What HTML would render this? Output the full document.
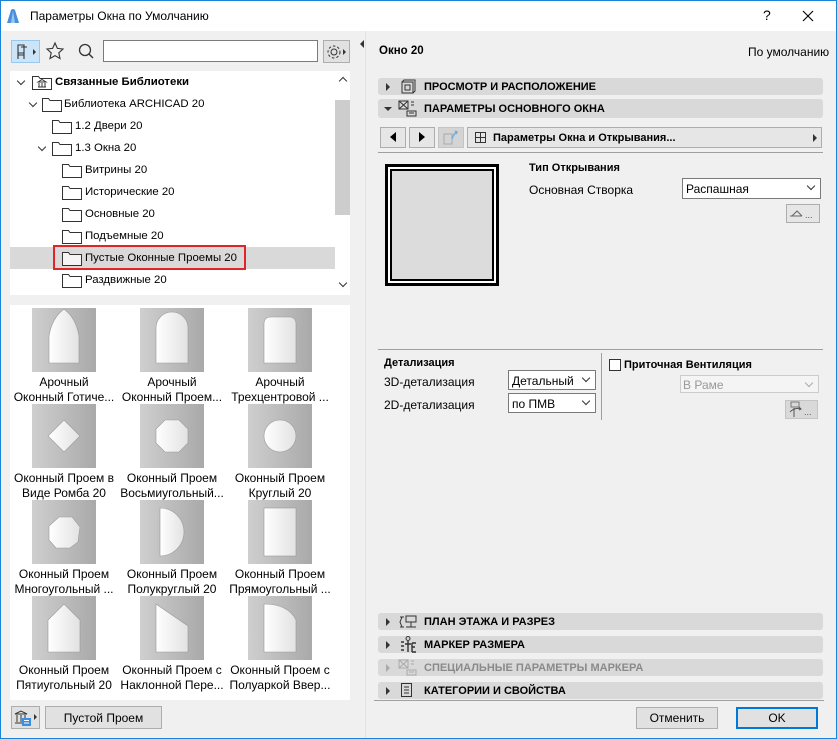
<!DOCTYPE html>
<html><head><meta charset="utf-8"><style>
*{box-sizing:border-box;margin:0;padding:0}
body{width:837px;height:739px;overflow:hidden;font-family:"Liberation Sans","Noto Sans CJK SC",sans-serif;font-size:12px;color:#000;background:#f0f0f0;position:relative}
.a{position:absolute}
.t{position:absolute;white-space:nowrap;line-height:14px}
.tr{font-size:11.4px}
.b{font-weight:bold}
.bar{position:absolute;left:378px;width:445px;height:17px;background:#d9d9d9;border-radius:3px}
.bar .t{left:46px;top:2px;font-weight:bold;font-size:11px}
.tri{position:absolute;width:0;height:0}
.btn{position:absolute;background:#e1e1e1;border:1px solid #adadad}
.sel{position:absolute;background:#fff;border:1px solid #7a7a7a}
.chev{position:absolute;width:6px;height:6px;border-right:1px solid #333;border-bottom:1px solid #333;transform:rotate(45deg)}
.cell{position:absolute;width:108px;text-align:center;line-height:15px;font-size:12px}
.thumb{position:absolute;width:64px;height:64px}
</style></head><body>
<div class="a" style="left:0;top:0;width:837px;height:739px;border:1px solid #1883d7;z-index:9;pointer-events:none"></div>
<div class="a" style="left:0;top:0;width:837px;height:31px;background:#fff"></div>
<svg class="a" style="left:6px;top:8px" width="14" height="16"><path d="M1 15 L5 2 Q7 0 9 2 L13 15Z" fill="#4a8fdc"/><path d="M5 15 L7 3 L9 15Z" fill="#9cc6f2"/></svg>
<div class="t" style="left:30px;top:9px;font-size:12px">Параметры Окна по Умолчанию</div>
<div class="t" style="left:763px;top:8px;font-size:14px">?</div>
<svg class="a" style="left:802px;top:10px" width="12" height="12"><path d="M1 1L11 11M11 1L1 11" stroke="#000" stroke-width="1.1"/></svg>

<div class="a" style="left:365px;top:31px;width:1px;height:708px;background:#e3e3e3"></div>
<div class="tri" style="left:360px;top:40px;border-right:4px solid #333;border-top:4px solid transparent;border-bottom:4px solid transparent"></div>

<div class="a" style="left:11px;top:40px;width:29px;height:23px;background:#cce4f7;border:1px solid #99c8ee"></div>
<svg class="a" style="left:15px;top:43px" width="24" height="18"><path d="M3 2h6v8H3zM3 10v6M9 10v6M3 12h6M6 4h6" fill="none" stroke="#333" stroke-width="1.1"/><path d="M18 6l3 3-3 3z" fill="#333"/></svg>
<svg class="a" style="left:45px;top:41px" width="20" height="20"><path d="M10 2l2.4 5.4 5.6.6-4.2 3.8 1.2 5.7L10 14.6 5 17.5l1.2-5.7L2 8l5.6-.6z" fill="none" stroke="#333" stroke-width="1.1"/></svg>
<svg class="a" style="left:77px;top:42px" width="18" height="18"><circle cx="8" cy="8" r="5.5" fill="none" stroke="#333" stroke-width="1.3"/><path d="M12 12l4 4" stroke="#333" stroke-width="1.4"/></svg>
<div class="sel" style="left:103px;top:40px;width:215px;height:22px"></div>
<div class="btn" style="left:323px;top:40px;width:27px;height:23px"></div>
<svg class="a" style="left:325px;top:43px" width="24" height="18"><circle cx="9" cy="9" r="3" fill="none" stroke="#333"/><circle cx="9" cy="9" r="6" fill="none" stroke="#333" stroke-dasharray="2.5 2"/><path d="M18 6l3 3-3 3z" fill="#333"/></svg>

<div class="a" style="left:10px;top:71px;width:340px;height:224px;background:#fff"></div>
<div class="a" style="left:335px;top:100px;width:15px;height:115px;background:#cdcdcd"></div>
<div class="chev" style="left:340px;top:78px;transform:rotate(225deg)"></div>
<div class="chev" style="left:340px;top:280px"></div>
<div class="a" style="left:10px;top:247px;width:325px;height:22px;background:#d9d9d9"></div>
<div class="a" style="left:53px;top:245px;width:193px;height:25px;border:2px solid #e0252a"></div>

<div class="chev" style="left:18px;top:78px"></div>
<svg class="a" style="left:32px;top:74px" width="20" height="16"><path d="M.5 2.5h6l1.5 2h11.5v11H.5z" fill="#fff" stroke="#333"/><path d="M6 8l4-2.5 4 2.5zM6 13h8M7 9v3.5M10 9v3.5M13 9v3.5" stroke="#333" fill="none"/></svg>
<div class="t b tr" style="left:55px;top:75px">Связанные Библиотеки</div>

<div class="chev" style="left:30px;top:100px"></div>
<svg class="a" style="left:42px;top:96px" width="20" height="16"><path d="M.5 2.5h6l1.5 2h11.5v11H.5z" fill="#fff" stroke="#333"/></svg>
<div class="t tr" style="left:64px;top:97px">Библиотека ARCHICAD 20</div>

<svg class="a" style="left:52px;top:118px" width="20" height="16"><path d="M.5 2.5h6l1.5 2h11.5v11H.5z" fill="#fff" stroke="#333"/></svg>
<div class="t tr" style="left:75px;top:119px">1.2 Двери 20</div>

<div class="chev" style="left:39px;top:144px"></div>
<svg class="a" style="left:52px;top:140px" width="20" height="16"><path d="M.5 2.5h6l1.5 2h11.5v11H.5z" fill="#fff" stroke="#333"/></svg>
<div class="t tr" style="left:75px;top:141px">1.3 Окна 20</div>

<svg class="a" style="left:62px;top:162px" width="20" height="16"><path d="M.5 2.5h6l1.5 2h11.5v11H.5z" fill="#fff" stroke="#333"/></svg>
<div class="t tr" style="left:85px;top:163px">Витрины 20</div>
<svg class="a" style="left:62px;top:184px" width="20" height="16"><path d="M.5 2.5h6l1.5 2h11.5v11H.5z" fill="#fff" stroke="#333"/></svg>
<div class="t tr" style="left:85px;top:185px">Исторические 20</div>
<svg class="a" style="left:62px;top:206px" width="20" height="16"><path d="M.5 2.5h6l1.5 2h11.5v11H.5z" fill="#fff" stroke="#333"/></svg>
<div class="t tr" style="left:85px;top:207px">Основные 20</div>
<svg class="a" style="left:62px;top:228px" width="20" height="16"><path d="M.5 2.5h6l1.5 2h11.5v11H.5z" fill="#fff" stroke="#333"/></svg>
<div class="t tr" style="left:85px;top:229px">Подъемные 20</div>
<svg class="a" style="left:62px;top:250px" width="20" height="16"><path d="M.5 2.5h6l1.5 2h11.5v11H.5z" fill="#f4f4f4" stroke="#333"/></svg>
<div class="t tr" style="left:85px;top:251px">Пустые Оконные Проемы 20</div>
<svg class="a" style="left:62px;top:272px" width="20" height="16"><path d="M.5 2.5h6l1.5 2h11.5v11H.5z" fill="#fff" stroke="#333"/></svg>
<div class="t tr" style="left:85px;top:273px">Раздвижные 20</div>

<div class="a" style="left:10px;top:305px;width:340px;height:395px;background:#fff"></div>
<svg width="0" height="0" style="position:absolute"><defs>
<linearGradient id="g" x1="0" y1="0" x2="1" y2="0"><stop offset="0" stop-color="#cfcfcf"/><stop offset="1" stop-color="#a9a9a9"/></linearGradient>
<linearGradient id="w" x1="0" y1="0" x2="1" y2="0"><stop offset="0" stop-color="#fff"/><stop offset="1" stop-color="#e2e2e2"/></linearGradient>
</defs></svg>
<svg class="thumb" style="left:32px;top:308px"><rect width="64" height="64" fill="url(#g)"/><path d="M17 55V28Q20 10 32 1Q44 10 47 28V55z" fill="url(#w)" stroke="#999" stroke-width=".6"/></svg>
<svg class="thumb" style="left:140px;top:308px"><rect width="64" height="64" fill="url(#g)"/><path d="M16 55V20A16 16 0 0 1 48 20V55z" fill="url(#w)" stroke="#999" stroke-width=".6"/></svg>
<svg class="thumb" style="left:248px;top:308px"><rect width="64" height="64" fill="url(#g)"/><path d="M16 55V16Q16 9 23 9H41Q48 9 48 16V55z" fill="url(#w)" stroke="#999" stroke-width=".6"/></svg>
<div class="cell" style="left:10px;top:375px">Арочный<br>Оконный Готиче...</div>
<div class="cell" style="left:118px;top:375px">Арочный<br>Оконный Проем...</div>
<div class="cell" style="left:226px;top:375px">Арочный<br>Трехцентровой ...</div>
<svg class="thumb" style="left:32px;top:404px"><rect width="64" height="64" fill="url(#g)"/><path d="M32 16L48 32L32 48L16 32z" fill="url(#w)" stroke="#999" stroke-width=".6"/></svg>
<svg class="thumb" style="left:140px;top:404px"><rect width="64" height="64" fill="url(#g)"/><path d="M25 16H39L48 25V39L39 48H25L16 39V25z" fill="url(#w)" stroke="#999" stroke-width=".6"/></svg>
<svg class="thumb" style="left:248px;top:404px"><rect width="64" height="64" fill="url(#g)"/><circle cx="32" cy="32" r="16" fill="url(#w)" stroke="#999" stroke-width=".6"/></svg>
<div class="cell" style="left:10px;top:471px">Оконный Проем в<br>Виде Ромба 20</div>
<div class="cell" style="left:118px;top:471px">Оконный Проем<br>Восьмиугольный...</div>
<div class="cell" style="left:226px;top:471px">Оконный Проем<br>Круглый 20</div>
<svg class="thumb" style="left:32px;top:500px"><rect width="64" height="64" fill="url(#g)"/><path d="M27 17L40 17L48 27L46 42L38 48L24 48L17 40L17 26z" fill="url(#w)" stroke="#999" stroke-width=".6"/></svg>
<svg class="thumb" style="left:140px;top:500px"><rect width="64" height="64" fill="url(#g)"/><path d="M20 8V56A24 24 0 0 0 20 8z" fill="url(#w)" stroke="#999" stroke-width=".6"/></svg>
<svg class="thumb" style="left:248px;top:500px"><rect width="64" height="64" fill="url(#g)"/><rect x="16" y="8" width="32" height="48" fill="url(#w)" stroke="#999" stroke-width=".6"/></svg>
<div class="cell" style="left:10px;top:567px">Оконный Проем<br>Многоугольный ...</div>
<div class="cell" style="left:118px;top:567px">Оконный Проем<br>Полукруглый 20</div>
<div class="cell" style="left:226px;top:567px">Оконный Проем<br>Прямоугольный ...</div>
<svg class="thumb" style="left:32px;top:596px"><rect width="64" height="64" fill="url(#g)"/><path d="M16 56V24L32 8L48 24V56z" fill="url(#w)" stroke="#999" stroke-width=".6"/></svg>
<svg class="thumb" style="left:140px;top:596px"><rect width="64" height="64" fill="url(#g)"/><path d="M16 56V8L48 30V56z" fill="url(#w)" stroke="#999" stroke-width=".6"/></svg>
<svg class="thumb" style="left:248px;top:596px"><rect width="64" height="64" fill="url(#g)"/><path d="M16 56V8Q40 8 48 24V56z" fill="url(#w)" stroke="#999" stroke-width=".6"/></svg>
<div class="cell" style="left:10px;top:663px">Оконный Проем<br>Пятиугольный 20</div>
<div class="cell" style="left:118px;top:663px">Оконный Проем с<br>Наклонной Пере...</div>
<div class="cell" style="left:226px;top:663px">Оконный Проем с<br>Полуаркой Ввер...</div>

<div class="btn" style="left:11px;top:706px;width:29px;height:23px"></div>
<svg class="a" style="left:13px;top:708px" width="26" height="20"><path d="M2 6l6-3 6 3zM2 15h12M4 7v7M8 7v7M12 7v7" stroke="#333" fill="none"/><rect x="9" y="10" width="9" height="8" fill="#3a8fe0"/><path d="M11 12.5h5M11 15h5" stroke="#fff"/><path d="M21 6l3 3-3 3z" fill="#333"/></svg>
<div class="btn" style="left:45px;top:706px;width:117px;height:23px"></div>
<div class="t" style="left:45px;top:711px;width:117px;text-align:center">Пустой Проем</div>

<div class="t b" style="left:379px;top:44px;font-size:11.5px">Окно 20</div>
<div class="t" style="left:748px;top:45px">По умолчанию</div>

<div class="bar" style="top:78px"><div class="tri" style="left:8px;top:5px;border-left:4px solid #333;border-top:4px solid transparent;border-bottom:4px solid transparent"></div>
<svg class="a" style="left:22px;top:1px" width="16" height="15"><rect x="2" y="3" width="11" height="11" fill="none" stroke="#333"/><rect x="5" y="6" width="5" height="5" fill="none" stroke="#333"/><path d="M2 3l2-2h11v11l-2 2" fill="none" stroke="#333"/></svg>
<div class="t">ПРОСМОТР И РАСПОЛОЖЕНИЕ</div></div>

<div class="bar" style="top:99px;height:19px"><div class="tri" style="left:6px;top:8px;border-top:4px solid #333;border-left:4px solid transparent;border-right:4px solid transparent"></div>
<svg class="a" style="left:20px;top:1px" width="20" height="17"><rect x="1" y="1" width="9" height="8" fill="none" stroke="#333"/><path d="M1 1l9 8M10 1l-9 8M13 2h3M13 5h3M9 11h9v5H9zM11 13h5" stroke="#333" fill="none"/></svg>
<div class="t" style="top:3px">ПАРАМЕТРЫ ОСНОВНОГО ОКНА</div></div>

<div class="btn" style="left:380px;top:127px;width:26px;height:21px;background:#e6e6e6"></div>
<div class="tri" style="left:390px;top:132px;border-right:6px solid #000;border-top:5px solid transparent;border-bottom:5px solid transparent"></div>
<div class="btn" style="left:409px;top:127px;width:26px;height:21px;background:#e6e6e6"></div>
<div class="tri" style="left:419px;top:132px;border-left:6px solid #000;border-top:5px solid transparent;border-bottom:5px solid transparent"></div>
<div class="btn" style="left:438px;top:127px;width:26px;height:21px;background:#d4d4d4;border-color:#c4c4c4"></div>
<svg class="a" style="left:443px;top:130px" width="16" height="15"><rect x="1" y="4" width="8" height="10" fill="none" stroke="#aaa"/><path d="M9 9Q11 3 14 2M12 1l2 1-1 2" stroke="#6aaee8" fill="none" stroke-width="1.5"/></svg>
<div class="btn" style="left:467px;top:127px;width:355px;height:21px;background:#e6e6e6"></div>
<svg class="a" style="left:475px;top:132px" width="12" height="12"><rect x=".5" y=".5" width="10" height="10" fill="none" stroke="#333"/><path d="M5.5 0v11M0 5.5h11" stroke="#333"/></svg>
<div class="t b" style="left:493px;top:131px;font-size:11px">Параметры Окна и Открывания...</div>
<div class="tri" style="left:813px;top:134px;border-left:4px solid #333;border-top:4px solid transparent;border-bottom:4px solid transparent"></div>

<div class="a" style="left:378px;top:152px;width:445px;height:1px;background:#a0a0a0"></div>
<div class="a" style="left:385px;top:164px;width:114px;height:122px;border:3px solid #000;background:#fff"></div>
<div class="a" style="left:390px;top:169px;width:104px;height:112px;border:2px solid #000;background:#dcdcdc"></div>

<div class="t b" style="left:529px;top:161px;font-size:11px">Тип Открывания</div>
<div class="t" style="left:529px;top:183px">Основная Створка</div>
<div class="sel" style="left:682px;top:178px;width:139px;height:21px"></div>
<div class="t" style="left:686px;top:182px">Распашная</div>
<div class="chev" style="left:808px;top:183px"></div>
<div class="btn" style="left:786px;top:204px;width:34px;height:19px;background:#e6e6e6"></div>
<svg class="a" style="left:788px;top:206px" width="30" height="15"><path d="M2 10h12M4 10l5-5 5 5" stroke="#666" fill="none"/><text x="17" y="12" font-size="9" fill="#555" font-family="Liberation Sans">...</text></svg>

<div class="a" style="left:378px;top:349px;width:445px;height:1px;background:#a0a0a0"></div>
<div class="a" style="left:601px;top:353px;width:1px;height:67px;background:#a0a0a0"></div>
<div class="t b" style="left:384px;top:356px;font-size:11px">Детализация</div>
<div class="t" style="left:384px;top:375px">3D-детализация</div>
<div class="sel" style="left:508px;top:370px;width:88px;height:20px"></div>
<div class="t" style="left:512px;top:374px">Детальный</div>
<div class="chev" style="left:583px;top:375px"></div>
<div class="t" style="left:384px;top:398px">2D-детализация</div>
<div class="sel" style="left:508px;top:393px;width:88px;height:20px"></div>
<div class="t" style="left:512px;top:397px">по ПМВ</div>
<div class="chev" style="left:583px;top:398px"></div>
<div class="a" style="left:609px;top:359px;width:12px;height:12px;border:1px solid #333;background:#fff"></div>
<div class="t b" style="left:624px;top:358px;font-size:11px">Приточная Вентиляция</div>
<div class="a" style="left:680px;top:375px;width:139px;height:18px;border:1px solid #ccc;background:#f4f4f4"></div>
<div class="t" style="left:683px;top:378px;color:#999">В Раме</div>
<div class="chev" style="left:806px;top:380px;border-color:#aaa"></div>
<div class="btn" style="left:785px;top:400px;width:33px;height:19px;background:#d9d9d9;border-color:#c4c4c4"></div>
<svg class="a" style="left:787px;top:401px" width="30" height="17"><rect x="4" y="1" width="8" height="5" fill="none" stroke="#777"/><path d="M3 11Q8 6 14 8M12 6l2 2-2 1M7 7v9" stroke="#555" fill="none"/><text x="17" y="14" font-size="9" fill="#555" font-family="Liberation Sans">...</text></svg>

<div class="bar" style="top:613px"><div class="tri" style="left:8px;top:5px;border-left:4px solid #333;border-top:4px solid transparent;border-bottom:4px solid transparent"></div>
<svg class="a" style="left:20px;top:1px" width="20" height="15"><path d="M2 3h4M4 3l-2 5 2 5M2 13h4M8 2h10v6H8zM13 8v5M8 13h10" stroke="#333" fill="none"/></svg>
<div class="t">ПЛАН ЭТАЖА И РАЗРЕЗ</div></div>
<div class="bar" style="top:636px"><div class="tri" style="left:8px;top:5px;border-left:4px solid #333;border-top:4px solid transparent;border-bottom:4px solid transparent"></div>
<svg class="a" style="left:20px;top:0" width="20" height="17"><circle cx="10" cy="2.5" r="2" fill="none" stroke="#333"/><path d="M10 5v11M3 6h3M3 10h3M3 14h3M14 7h4M14 7v9M14 11h3M14 16h4M7 8h6" stroke="#333" stroke-width="1.4" fill="none"/></svg>
<div class="t">МАРКЕР РАЗМЕРА</div></div>
<div class="bar" style="top:659px"><div class="tri" style="left:8px;top:5px;border-left:4px solid #aaa;border-top:4px solid transparent;border-bottom:4px solid transparent"></div>
<svg class="a" style="left:20px;top:0" width="20" height="17"><rect x="1" y="1" width="9" height="8" fill="none" stroke="#aaa"/><path d="M1 1l9 8M10 1l-9 8M13 2h3M13 5h3M9 11h9v5H9zM11 13h5" stroke="#aaa" fill="none"/></svg>
<div class="t" style="color:#8a8a8a">СПЕЦИАЛЬНЫЕ ПАРАМЕТРЫ МАРКЕРА</div></div>
<div class="bar" style="top:682px"><div class="tri" style="left:8px;top:5px;border-left:4px solid #333;border-top:4px solid transparent;border-bottom:4px solid transparent"></div>
<svg class="a" style="left:22px;top:1px" width="14" height="15"><rect x="1.5" y=".5" width="10" height="13" fill="none" stroke="#333"/><path d="M4 4h5M4 7h5M4 10h5" stroke="#333"/></svg>
<div class="t">КАТЕГОРИИ И СВОЙСТВА</div></div>

<div class="a" style="left:374px;top:700px;width:450px;height:1px;background:#a0a0a0"></div>
<div class="btn" style="left:636px;top:707px;width:82px;height:22px"></div>
<div class="t" style="left:636px;top:711px;width:82px;text-align:center">Отменить</div>
<div class="btn" style="left:736px;top:707px;width:82px;height:22px;border:2px solid #0078d7"></div>
<div class="t" style="left:736px;top:711px;width:82px;text-align:center">OK</div>
</body></html>
